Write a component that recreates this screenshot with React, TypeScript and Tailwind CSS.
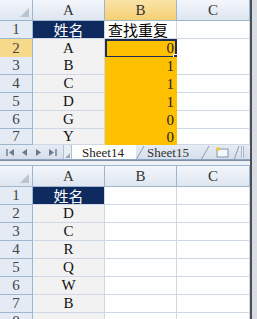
import React from "react";

const serif = { fontFamily: '"Liberation Serif", "Noto Sans CJK SC", serif' };
const cjk = { fontFamily: '"Noto Sans CJK SC", "Liberation Sans", sans-serif' };

const cols = "grid grid-cols-[33px_72px_72px_73px]";

function ColHeader({ hot }: { hot?: boolean }) {
  return (
    <div
      className={`${cols} h-[21px] shrink-0 border-b border-[#9eb6ce] text-[15px] leading-none text-[#333]`}
      style={serif}
    >
      <div className="relative border-r border-[#9eb6ce] bg-gradient-to-b from-[#f3f6fb] to-[#dfe6f0]">
        <div className="absolute bottom-[3px] right-[3px] h-0 w-0 border-b-[9px] border-l-[9px] border-b-[#b9c4d2] border-l-transparent" />
      </div>
      <div className="flex items-center justify-center border-r border-[#9eb6ce] bg-gradient-to-b from-[#f3f6fb] to-[#dfe6f0]">
        A
      </div>
      <div
        className={`flex items-center justify-center border-r border-[#9eb6ce] ${
          hot
            ? "bg-gradient-to-b from-[#fbe3a8] to-[#f5cf72]"
            : "bg-gradient-to-b from-[#f3f6fb] to-[#dfe6f0]"
        }`}
      >
        B
      </div>
      <div className="flex items-center justify-center border-r border-[#9eb6ce] bg-gradient-to-b from-[#f3f6fb] to-[#dfe6f0]">
        C
      </div>
    </div>
  );
}

type Row = { n: number; a: string; b?: string; head?: boolean; hot?: boolean; sel?: boolean; orange?: boolean };

function GridRow({ r, h = 18 }: { r: Row; h?: number }) {
  return (
    <div className={`${cols} shrink-0 text-[15px] leading-none`} style={{ height: h }}>
      <div
        className={`flex items-center justify-center border-r border-b border-[#9eb6ce] text-[#444] ${
          r.hot ? "bg-[#f7d98c]" : "bg-[#e4ebf5]"
        }`}
        style={serif}
      >
        {r.n}
      </div>
      {r.head ? (
        <div className="flex items-center justify-center border-b border-r border-[#d0d7e5] bg-[#0f2a5e] text-[15px] text-white" style={cjk}>
          {r.a}
        </div>
      ) : (
        <div className="flex items-center justify-center border-b border-r border-[#d0d7e5] bg-[#f2f2f2] text-[#111]" style={serif}>
          {r.a}
        </div>
      )}
      {r.head ? (
        <div className="flex items-center whitespace-nowrap border-b border-r border-[#d0d7e5] bg-white pl-[3px] text-[15px] text-black" style={cjk}>
          {r.b}
        </div>
      ) : r.orange ? (
        <div
          className={`relative z-10 flex items-center justify-end ${
            r.sel ? "border-2 border-[#1f2d50] pr-[1px]" : "pr-[3px]"
          } bg-[#ffc000] text-[#222]`}
          style={serif}
        >
          {r.b}
          {r.sel && <div className="absolute -bottom-[3px] -right-[3px] h-[5px] w-[5px] border border-white bg-[#1f2d50]" />}
        </div>
      ) : (
        <div className="border-b border-r border-[#d0d7e5] bg-white" />
      )}
      <div className="border-b border-r border-[#d0d7e5] bg-white" />
    </div>
  );
}

function Slant({ w = 9 }: { w?: number }) {
  return (
    <svg width={w} height="15" viewBox={`0 0 ${w} 15`} className="shrink-0">
      <path d={`M0 15 L${w - 1} 1`} stroke="#8b9bb3" strokeWidth="1" fill="none" />
    </svg>
  );
}

function TabBar() {
  return (
    <div className="flex h-[15px] shrink-0 items-stretch overflow-hidden border-b border-[#8ea3bf] bg-gradient-to-b from-[#e6ecf4] to-[#d6dfeb] leading-none">
      <div className="flex w-[63px] shrink-0 items-center justify-around px-[3px]">
        <svg width="9" height="9" viewBox="0 0 9 9"><path d="M1 1v7" stroke="#6a7b92" strokeWidth="1.4" /><path d="M8 1 L3 4.5 L8 8z" fill="#6a7b92" /></svg>
        <svg width="9" height="9" viewBox="0 0 9 9"><path d="M7 1 L2 4.5 L7 8z" fill="#6a7b92" /></svg>
        <svg width="9" height="9" viewBox="0 0 9 9"><path d="M2 1 L7 4.5 L2 8z" fill="#6a7b92" /></svg>
        <svg width="9" height="9" viewBox="0 0 9 9"><path d="M8 1v7" stroke="#6a7b92" strokeWidth="1.4" /><path d="M1 1 L6 4.5 L1 8z" fill="#6a7b92" /></svg>
      </div>
      <div className="relative w-[9px] shrink-0 border-x border-[#b3c0d2] bg-[#e9eef5]">
        <div className="absolute bottom-[1px] right-[1px] h-0 w-0 border-b-[5px] border-l-[5px] border-b-[#9aa9bd] border-l-transparent" />
      </div>
      <div className="flex w-[64px] shrink-0 items-center bg-white pl-[10px] text-[13px] text-[#222]" style={serif}>
        Sheet14
      </div>
      <Slant />
      <div className="flex w-[56px] shrink-0 items-center pl-[2px] text-[13px] text-[#333]" style={serif}>
        Sheet15
      </div>
      <Slant />
      <div className="flex w-[24px] shrink-0 items-center justify-center">
        <svg width="16" height="12" viewBox="0 0 16 12">
          <rect x="3" y="3" width="11" height="8" fill="#f4f6f9" stroke="#8595ab" />
          <circle cx="4" cy="3" r="2" fill="#f2c94c" />
        </svg>
      </div>
      <Slant w={6} />
      <div className="my-[1px] ml-[1px] w-[3px] shrink-0 border-x border-[#a8b5c6] bg-[#eef1f6]" />
    </div>
  );
}

export default function App() {
  const top: Row[] = [
    { n: 1, a: "姓名", b: "查找重复", head: true },
    { n: 2, a: "A", b: "0", hot: true, sel: true, orange: true },
    { n: 3, a: "B", b: "1", orange: true },
    { n: 4, a: "C", b: "1", orange: true },
    { n: 5, a: "D", b: "1", orange: true },
    { n: 6, a: "G", b: "0", orange: true },
    { n: 7, a: "Y", b: "0", orange: true },
  ];
  const bottom: Row[] = [
    { n: 1, a: "姓名", head: true },
    { n: 2, a: "D" },
    { n: 3, a: "C" },
    { n: 4, a: "R" },
    { n: 5, a: "Q" },
    { n: 6, a: "W" },
    { n: 7, a: "B" },
    { n: 8, a: "" },
  ];
  return (
    <div className="flex h-[319px] w-[257px] overflow-hidden bg-white">
      <div className="flex w-[250px] shrink-0 flex-col">
        <ColHeader hot />
        {top.map((r, i) => (
          <GridRow key={i} r={r} h={i === 6 ? 16 : 18} />
        ))}
        <TabBar />
        <div className="h-[6px] shrink-0 border-t border-b border-t-[#7d8ea6] border-b-[#9eb6ce] bg-[#eef1f5]" />
        <ColHeader />
        {bottom.map((r, i) => (
          <GridRow key={i} r={{ ...r, b: undefined, orange: false }} />
        ))}
      </div>
      <div className="w-[2px] shrink-0 bg-[#4a4f57]" />
      <div className="flex-1 bg-[#d9dce1]" />
    </div>
  );
}
